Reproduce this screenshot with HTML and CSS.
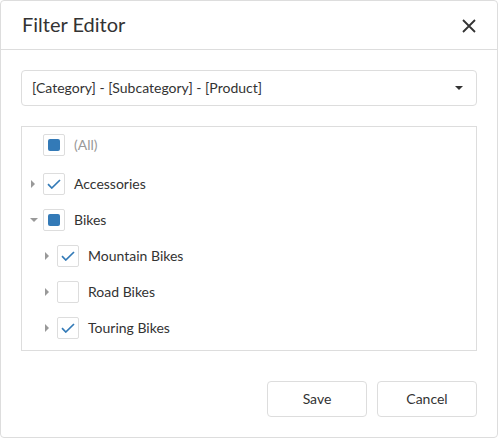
FILE: index.html
```html
<!DOCTYPE html>
<html>
<head>
<meta charset="utf-8">
<link rel="stylesheet" href="styles.css">
</head>
<body>
<div class="dialog">
  <div class="header">
    <div class="title">Filter Editor</div>
    <button class="close" aria-label="Close">
      <svg width="14" height="14" viewBox="0 0 14 14"><path d="M1 1 L13 13 M13 1 L1 13" stroke="#333" stroke-width="1.8" fill="none"/></svg>
    </button>
  </div>
  <div class="content">
    <div class="select">
      <span class="select-text">[Category] - [Subcategory] - [Product]</span>
      <span class="caret"></span>
    </div>
    <div class="tree">
      <div class="row all">
        <span class="arrow"></span>
        <span class="cb"><span class="ind"></span></span>
        <span class="label muted">(All)</span>
      </div>
      <div class="row">
        <span class="arrow"><span class="tri-right"></span></span>
        <span class="cb"><svg class="check" width="14" height="10" viewBox="0 0 14 10"><path d="M1 5.2 L4.8 9 L13 1" stroke="#337ab7" stroke-width="1.7" fill="none"/></svg></span>
        <span class="label">Accessories</span>
      </div>
      <div class="row">
        <span class="arrow"><span class="tri-down"></span></span>
        <span class="cb"><span class="ind"></span></span>
        <span class="label">Bikes</span>
      </div>
      <div class="row level1">
        <span class="arrow"><span class="tri-right"></span></span>
        <span class="cb"><svg class="check" width="14" height="10" viewBox="0 0 14 10"><path d="M1 5.2 L4.8 9 L13 1" stroke="#337ab7" stroke-width="1.7" fill="none"/></svg></span>
        <span class="label">Mountain Bikes</span>
      </div>
      <div class="row level1">
        <span class="arrow"><span class="tri-right"></span></span>
        <span class="cb"></span>
        <span class="label">Road Bikes</span>
      </div>
      <div class="row level1">
        <span class="arrow"><span class="tri-right"></span></span>
        <span class="cb"><svg class="check" width="14" height="10" viewBox="0 0 14 10"><path d="M1 5.2 L4.8 9 L13 1" stroke="#337ab7" stroke-width="1.7" fill="none"/></svg></span>
        <span class="label">Touring Bikes</span>
      </div>
    </div>
  </div>
  <div class="footer">
    <button class="btn">Save</button>
    <button class="btn">Cancel</button>
  </div>
</div>
</body>
</html>
```

FILE: styles.css
```css
* { box-sizing: border-box; }
html, body { margin: 0; padding: 0; background: #fff; }
body {
  font-family: "Lato", "Open Sans", "Liberation Sans", sans-serif;
  color: #333;
  font-size: 14px;
}
.dialog {
  width: 498px;
  height: 438px;
  border: 1px solid #ddd;
  border-radius: 4px;
  background: #fff;
  display: flex;
  flex-direction: column;
}
.header {
  height: 49px;
  border-bottom: 1px solid #ddd;
  display: flex;
  align-items: center;
  justify-content: space-between;
  padding: 0 20px 0 21px;
}
.title {
  font-size: 20px;
  color: #333;
  padding-bottom: 3px;
}
.close {
  border: 0;
  background: none;
  padding: 0;
  width: 14px;
  height: 14px;
  display: flex;
  margin-right: 1px;
  margin-top: 1px;
}
.content {
  padding: 20px 20px 0 20px;
}
.select {
  height: 36px;
  border: 1px solid #ddd;
  border-radius: 4px;
  display: flex;
  align-items: center;
  justify-content: space-between;
  padding: 0 13px 0 10px;
}
.select-text { font-size: 14px; color: #333; padding-bottom: 1px; }
.caret {
  width: 0; height: 0;
  border-left: 4px solid transparent;
  border-right: 4px solid transparent;
  border-top: 4px solid #333;
}
.tree {
  margin-top: 20px;
  height: 225px;
  border: 1px solid #ddd;
}
.row {
  height: 36px;
  display: flex;
  align-items: center;
  padding-left: 6px;
}
.row.all { margin-bottom: 3px; }
.row.level1 { padding-left: 20px; }
.arrow {
  width: 12px;
  height: 12px;
  display: flex;
  align-items: center;
  justify-content: center;
  margin-right: 3px;
}
.tri-right {
  width: 0; height: 0;
  border-top: 4px solid transparent;
  border-bottom: 4px solid transparent;
  border-left: 4px solid #999;
  margin-left: -2px;
}
.tri-down {
  width: 0; height: 0;
  border-left: 4px solid transparent;
  border-right: 4px solid transparent;
  border-top: 4px solid #999;
}
.cb {
  width: 22px;
  height: 22px;
  border: 1px solid #ddd;
  border-radius: 2px;
  display: flex;
  align-items: center;
  justify-content: center;
  flex-shrink: 0;
}
.ind {
  width: 12px;
  height: 12px;
  background: #337ab7;
  border-radius: 2px;
}
.label {
  margin-left: 9px;
  color: #333;
  font-size: 14px;
  padding-bottom: 2px;
}
.label.muted { color: #999; }
.footer {
  display: flex;
  justify-content: flex-end;
  gap: 10px;
  padding: 30px 20px 0 0;
}
.btn {
  width: 100px;
  height: 36px;
  border: 1px solid #ddd;
  border-radius: 4px;
  background: #fff;
  font-family: inherit;
  font-size: 14px;
  color: #333;
  padding: 0 0 2px 0;
}
```
